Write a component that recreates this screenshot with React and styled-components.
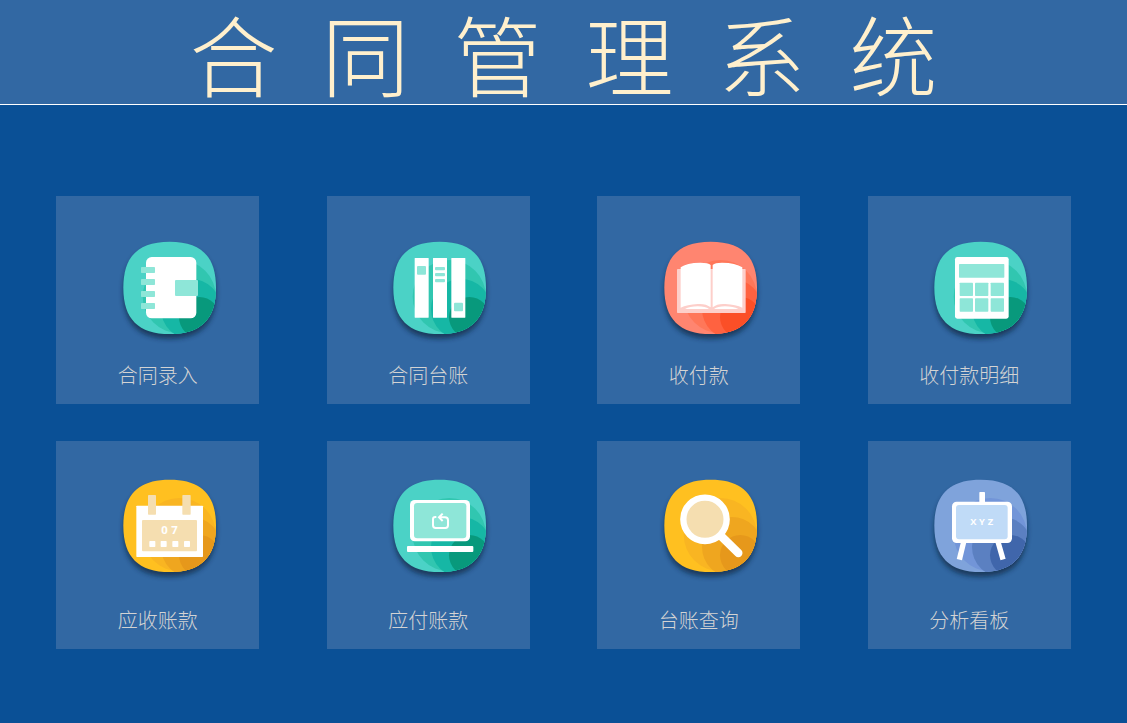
import React from 'react';
import styled, { createGlobalStyle } from 'styled-components';

const TEAL = ['#4bd2c6', '#31c6b0', '#16b7a5', '#08997c'];
const CORAL = ['#ff8570', '#ff7759', '#ff6240', '#fb4f27'];
const AMBER = ['#ffc020', '#f9b522', '#efa61f', '#e6981b'];
const INDIGO = ['#7fa3db', '#7295d8', '#5b80c1', '#4066ab'];

const GlobalStyle = createGlobalStyle`
  * {
    box-sizing: border-box;
  }
  body {
    margin: 0;
    min-height: 100vh;
    background-color: #0a5096;
    font-family: 'Liberation Serif', 'Noto Sans CJK SC', serif;
    font-weight: 300;
  }
`;

const Header = styled.header`
  display: flex;
  justify-content: center;
  background-color: #3268a3;
  border-bottom: 1px solid #fff;
`;

const Title = styled.h1`
  margin: 0;
  padding-top: 18px;
  font-size: 88px;
  font-weight: 300;
  line-height: 86px;
  color: #fff0cd;
  white-space: nowrap;
`;

const Menu = styled.nav`
  display: grid;
  grid-template-columns: repeat(4, 20%);
  justify-content: space-between;
  row-gap: 37px;
  padding: 91px 5% 74px;
`;

const Card = styled.a`
  display: flex;
  flex-direction: column;
  align-items: center;
  justify-content: space-between;
  height: 208px;
  padding: ${({ $low }) => ($low ? '34px' : '27px')} 0 14px;
  background-color: #3268a3;
  text-decoration: none;
`;

const Icon = styled.svg`
  width: 120px;
  height: 120px;
  margin-left: 24px;
  overflow: visible;
`;

const Label = styled.span`
  font-family: 'Noto Sans CJK SC', sans-serif;
  font-size: 20px;
  line-height: 30px;
  color: #d3d3d3;
`;

const Glyph = styled.text`
  font-family: 'Open Sans', sans-serif;
  font-weight: 700;
  fill: #fff;
`;

const BLOB =
  'M40 173C40 79 85 35 179 35S318 79 318 173S273 312 179 312S40 267 40 173Z';

const Badge = ({ id, colors, children }) => (
  <Icon viewBox="0 0 360 360" aria-hidden="true">
    <defs>
      <clipPath id={`clip-${id}`}>
        <path d={BLOB} />
      </clipPath>
      <filter id={`shadow-${id}`} x="-20%" y="-20%" width="140%" height="150%">
        <feGaussianBlur stdDeviation="8" />
      </filter>
    </defs>
    <path
      d={BLOB}
      fill="#0b2038"
      opacity="0.65"
      transform="translate(0 14)"
      filter={`url(#shadow-${id})`}
    />
    <path d={BLOB} fill={colors[0]} />
    <g clipPath={`url(#clip-${id})`}>
      <circle cx="208" cy="200" r="110" fill={colors[1]} />
      <circle cx="243" cy="237" r="90" fill={colors[2]} />
      <circle cx="268" cy="262" r="61" fill={colors[3]} />
    </g>
    {children}
  </Icon>
);

const Notebook = () => (
  <>
    <rect x="108" y="81" width="151" height="184" rx="17" fill="#fff" />
    {[111, 147, 183, 219].map(y => (
      <rect key={y} x="93" y={y} width="42" height="18" rx="2" fill="#8ee6d8" />
    ))}
    <rect x="195" y="150" width="69" height="48" rx="3" fill="#8ee6d8" />
  </>
);

const Binders = () => (
  <>
    {[104, 159, 214].map(x => (
      <rect key={x} x={x} y="84" width="42" height="179" rx="1" fill="#fff" />
    ))}
    <g fill="#8ee6d8">
      <rect x="111" y="108" width="27" height="26" rx="3" />
      <rect x="165" y="111" width="30" height="10" rx="3" />
      <rect x="165" y="129" width="30" height="10" rx="3" />
      <rect x="165" y="147" width="30" height="10" rx="3" />
      <rect x="222" y="218" width="27" height="26" rx="3" />
    </g>
  </>
);

const Book = () => (
  <>
    <rect x="78" y="117" width="206" height="132" rx="2" fill="#fdcfca" />
    <path
      d="M89 233V112Q106 98 148 98Q172 98 179 105V232Q164 220 140 222Q108 224 89 233Z"
      fill="#fff"
    />
    <path
      d="M274 233V112Q254 98 213 98Q192 98 185 105V232Q199 220 223 222Q255 224 274 233Z"
      fill="#fff"
    />
    <path d="M102 237Q116 229 140 229Q164 229 174 237Z" fill="#fff" />
    <path d="M189 237Q200 229 222 229Q247 229 262 237Z" fill="#fff" />
  </>
);

const Calculator = () => (
  <>
    <rect x="102" y="81" width="161" height="185" rx="7" fill="#fff" />
    <rect x="114" y="102" width="136" height="41" rx="2" fill="#8ee6d8" />
    {[158, 205].map(y =>
      [116, 162, 209].map(x => (
        <rect
          key={`${x}-${y}`}
          x={x}
          y={y}
          width="40"
          height="40"
          rx="2"
          fill="#8ee6d8"
        />
      ))
    )}
  </>
);

const Calendar = () => (
  <>
    <rect x="79" y="113" width="200" height="154" rx="2" fill="#fff" />
    <rect x="96" y="156" width="165" height="94" rx="3" fill="#f5deb0" />
    <rect x="114" y="81" width="24" height="59" rx="2" fill="#f5deb0" />
    <rect x="217" y="81" width="25" height="59" rx="2" fill="#f5deb0" />
    <Glyph x="154" y="198" fontSize="34">
      0
    </Glyph>
    <Glyph x="184" y="198" fontSize="34">
      7
    </Glyph>
    {[118, 152, 187, 222].map(x => (
      <rect key={x} x={x} y="219" width="18" height="18" rx="2" fill="#fff" />
    ))}
  </>
);

const Laptop = () => (
  <>
    <rect x="90" y="96" width="180" height="124" rx="14" fill="#fff" />
    <rect x="102" y="105" width="157" height="106" rx="10" fill="#8ee6d8" />
    <rect x="81" y="234" width="199" height="18" rx="3" fill="#fff" />
    <path
      d="M169 147H166Q159 147 159 154V172Q159 180 167 180H196Q204 180 204 172V157Q204 148 195 148H177M188 137L177 148L188 159"
      fill="none"
      stroke="#fff"
      strokeWidth="6"
    />
  </>
);

const Magnifier = () => (
  <>
    <path
      d="M207 201L262 255"
      stroke="#fff"
      strokeWidth="25"
      strokeLinecap="round"
    />
    <circle
      cx="162"
      cy="154"
      r="65"
      fill="#f5deb0"
      stroke="#fff"
      strokeWidth="19"
    />
  </>
);

const Easel = () => (
  <>
    <path
      d="M129 218L117 267M230 218L244 267"
      stroke="#fff"
      strokeWidth="16"
      strokeLinecap="square"
    />
    <rect x="175" y="72" width="17" height="36" rx="2" fill="#fff" />
    <rect x="93" y="101" width="180" height="124" rx="14" fill="#fff" />
    <rect x="105" y="111" width="155" height="103" rx="9" fill="#c0dbf7" />
    <Glyph x="148" y="171" fontSize="28">
      X
    </Glyph>
    <Glyph x="174" y="171" fontSize="28">
      Y
    </Glyph>
    <Glyph x="200" y="171" fontSize="28">
      Z
    </Glyph>
  </>
);

const MENU_ITEMS = [
  { id: 'entry', label: '合同录入', colors: TEAL, Drawing: Notebook, low: true },
  { id: 'ledger', label: '合同台账', colors: TEAL, Drawing: Binders, low: true },
  { id: 'payment', label: '收付款', colors: CORAL, Drawing: Book, low: true },
  { id: 'detail', label: '收付款明细', colors: TEAL, Drawing: Calculator, low: true },
  { id: 'receivable', label: '应收账款', colors: AMBER, Drawing: Calendar },
  { id: 'payable', label: '应付账款', colors: TEAL, Drawing: Laptop },
  { id: 'query', label: '台账查询', colors: AMBER, Drawing: Magnifier },
  { id: 'board', label: '分析看板', colors: INDIGO, Drawing: Easel },
];

const App = () => {
  return (
    <>
      <GlobalStyle />
      <Header>
        <Title>{'合\u2002同\u2002管\u2002理\u2002系\u2002统'}</Title>
      </Header>
      <main>
        <Menu>
          {MENU_ITEMS.map(({ id, label, colors, Drawing, low }) => (
            <Card key={id} href={`#${id}`} $low={low}>
              <Badge id={id} colors={colors}>
                <Drawing />
              </Badge>
              <Label>{label}</Label>
            </Card>
          ))}
        </Menu>
      </main>
    </>
  );
};

export default App;
